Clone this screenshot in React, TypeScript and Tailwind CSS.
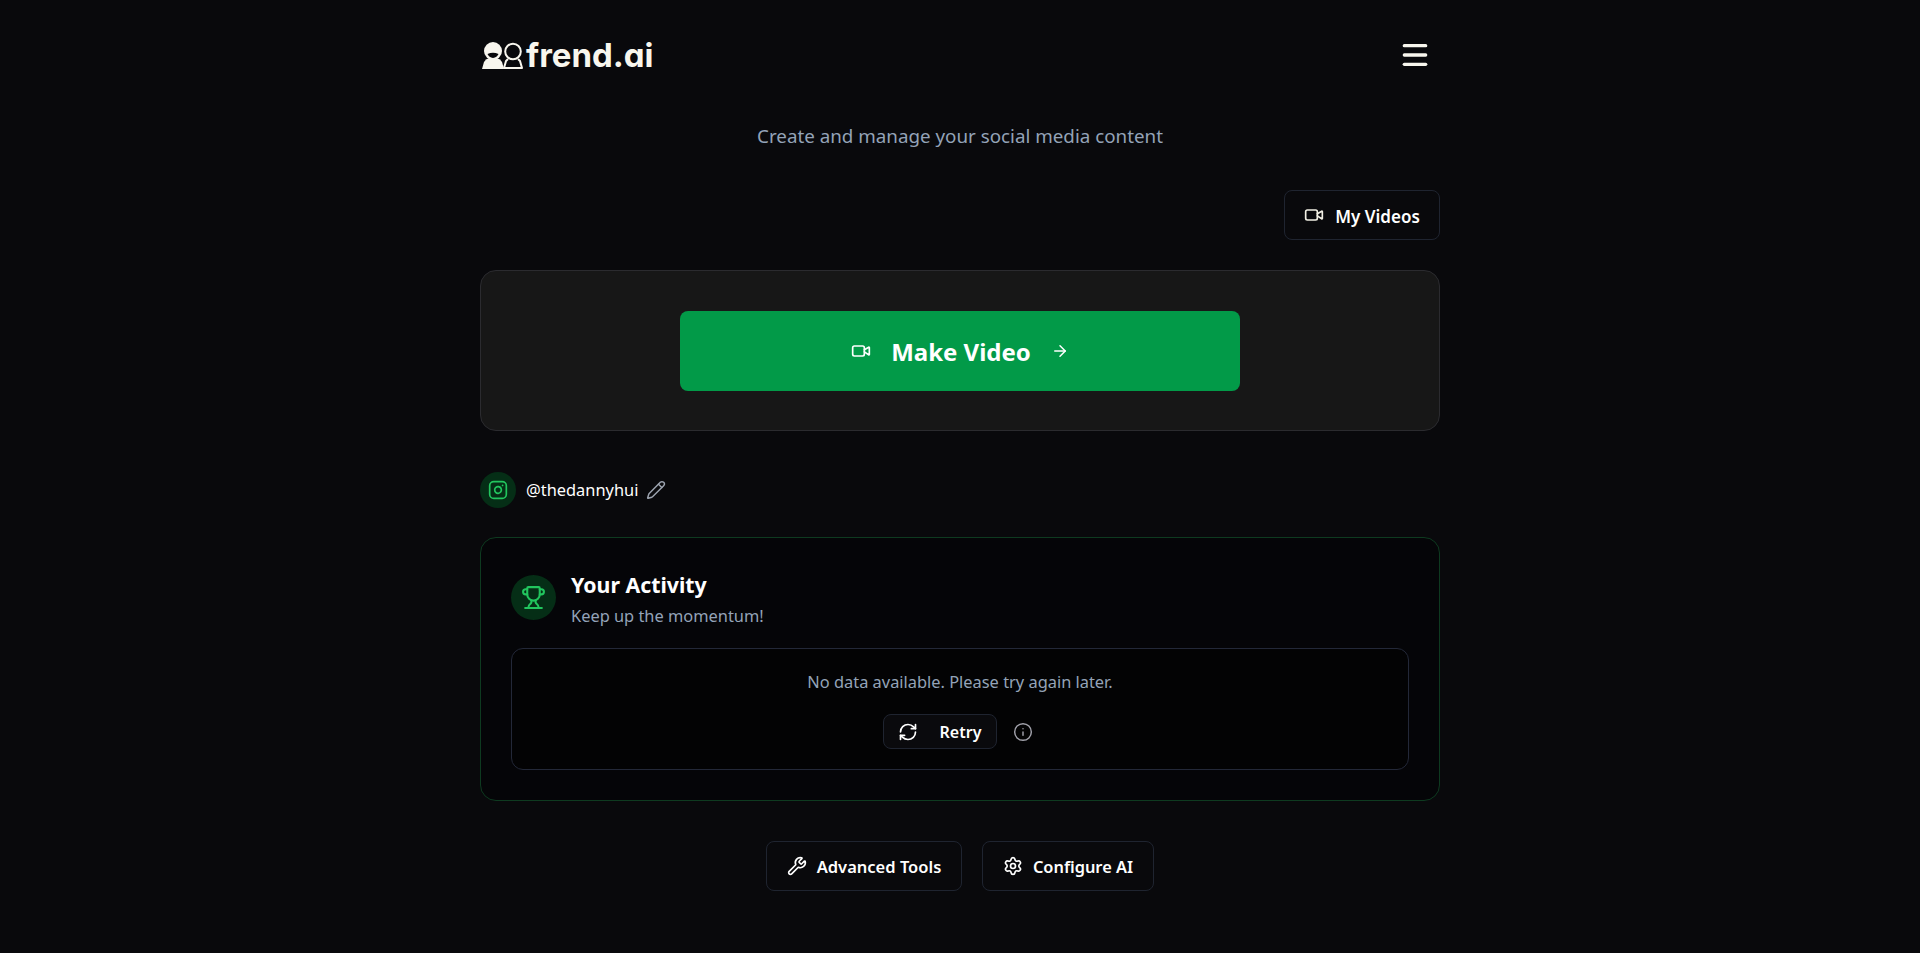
import { ArrowRight, Info, Instagram, Menu, Pencil, RefreshCw, Settings, Trophy, Video, Wrench } from "lucide-react";

function Logo() {
  return (
    <div className="ml-[2px] flex items-center gap-[3px]">
      <svg width="41" height="27" viewBox="0 0 41 27" fill="none">
        <circle cx="11" cy="9" r="9" fill="#f8f6ee" />
        <path d="M0 27 L2 20 Q3.5 17 7 16 L15 16 Q18.5 17 20 20 L22 27 Z" fill="#f8f6ee" />
        <path d="M5.5 12 Q11 9.5 16.5 12 Q15 15.5 11 16 Q7 15.5 5.5 12 Z" fill="#09090c" />
        <circle cx="31" cy="9.5" r="7.8" stroke="#f8f6ee" strokeWidth="2" />
        <path d="M26 17 L24 19 L22 26 L40 26 L38 19 L36 17" stroke="#f8f6ee" strokeWidth="2" strokeLinejoin="round" />
      </svg>
      <span className="font-['Inter',sans-serif] text-[33px] leading-none font-bold [font-feature-settings:'cv11'] text-[#f8f6ee]">frend.ai</span>
    </div>
  );
}

export default function App() {
  return (
    <div className="min-h-[953px] bg-[#09090c] font-['Noto_Sans',sans-serif] text-white">
      <div className="mx-auto flex w-[960px] flex-col">
        <header className="flex h-[110px] items-center justify-between">
          <Logo />
          <button className="mr-[9px] text-[#f8f6ee]">
            <Menu size={32} strokeWidth={2.5} />
          </button>
        </header>

        <p className="mt-[12px] text-center text-[18.8px] leading-[28px] text-[#94a3b8]">
          Create and manage your social media content
        </p>

        <div className="mt-[40px] flex justify-end">
          <button className="flex h-[50px] w-[156px] items-center justify-center gap-[11px] rounded-lg border border-[#1f2430] pt-[3px] text-[17px] font-semibold">
            <Video size={20} strokeWidth={2} className="mt-[-3px] text-[#f1efe4]" />
            My Videos
          </button>
        </div>

        <section className="mt-[30px] flex h-[161px] items-center justify-center rounded-2xl border border-[#2b2b2f] bg-[#171717]">
          <button className="flex h-[80px] w-[560px] items-center justify-center gap-[20px] rounded-lg bg-[#029a48] text-[24px] font-bold">
            <Video size={20} strokeWidth={2} />
            <span className="pt-[2px]">Make Video</span>
            <ArrowRight size={18} strokeWidth={2} />
          </button>
        </section>

        <div className="mt-[41px] flex h-[36px] items-center">
          <span className="flex h-[36px] w-[36px] items-center justify-center rounded-full bg-[#052e16]">
            <Instagram size={20} className="text-[#22c55e]" />
          </span>
          <span className="ml-[10px] text-[16.4px]">@thedannyhui</span>
          <Pencil size={20} strokeWidth={1.75} className="ml-[8px] text-[#9ca3af]" />
        </div>

        <section className="mt-[29px] flex h-[264px] flex-col rounded-2xl border border-[#0e3a20] bg-[#050508] px-[30px] pt-[37px]">
          <div className="flex items-start gap-[15px]">
            <span className="flex h-[45px] w-[45px] items-center justify-center rounded-full bg-[#052e16]">
              <Trophy size={25} strokeWidth={2} className="text-[#22c55e]" />
            </span>
            <div className="mt-[-4px]">
              <h2 className="text-[21.3px] leading-[28px] font-bold">Your Activity</h2>
              <p className="mt-[5px] text-[16.4px] leading-[24px] text-[#94a3b8]">Keep up the momentum!</p>
            </div>
          </div>
          <div className="mt-[20px] flex h-[122px] flex-col items-center rounded-xl border border-[#232838] bg-[#030304] pt-[21px]">
            <p className="text-[16.4px] leading-[24px] text-[#94a3b8]">No data available. Please try again later.</p>
            <div className="mt-[20px] mr-[5px] flex items-center gap-[16px]">
              <button className="flex h-[35px] w-[114px] items-center justify-center gap-[22px] rounded-lg border border-[#1f2430] bg-[#0a0a0d] pt-[1px] text-[16px] font-semibold">
                <RefreshCw size={20} strokeWidth={2} className="mt-[-1px]" />
                Retry
              </button>
              <Info size={20} strokeWidth={1.75} className="text-[#a1a1aa]" />
            </div>
          </div>
        </section>

        <div className="mt-[40px] flex justify-center gap-[20px]">
          <button className="flex h-[50px] w-[196px] items-center justify-center gap-[10px] rounded-lg border border-[#1f2430] pt-[3px] text-[16.5px] font-semibold">
            <Wrench size={20} strokeWidth={2} className="mt-[-3px]" />
            Advanced Tools
          </button>
          <button className="flex h-[50px] w-[172px] items-center justify-center gap-[10px] rounded-lg border border-[#1f2430] pt-[3px] text-[16.4px] font-semibold">
            <Settings size={20} strokeWidth={2} className="mt-[-3px]" />
            Configure AI
          </button>
        </div>
      </div>
    </div>
  );
}
